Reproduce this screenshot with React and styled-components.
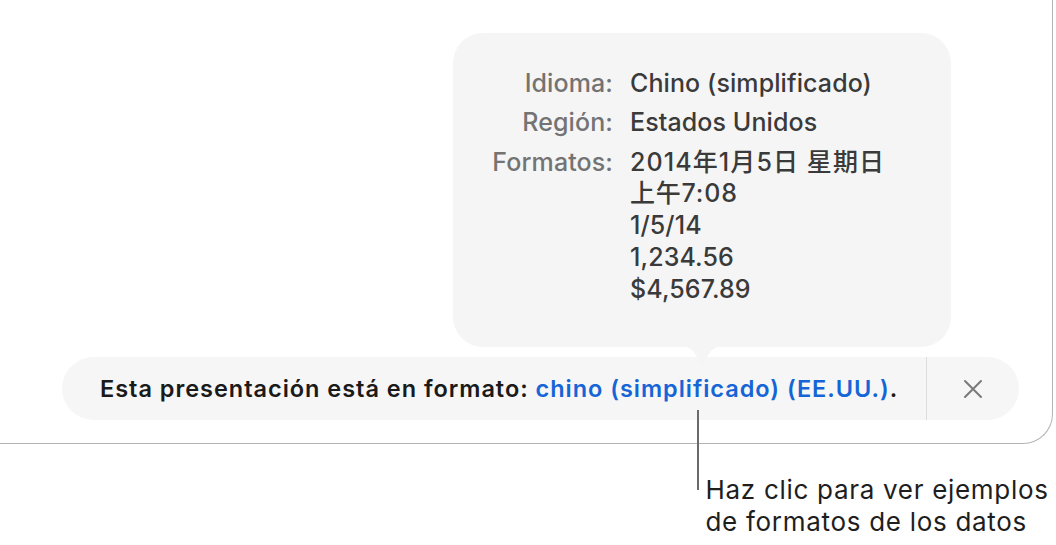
import React from "react";
import styled, { createGlobalStyle } from "styled-components";

const GlobalStyle = createGlobalStyle`
    html, body {
        margin: 0;
        padding: 0;
        background: #ffffff;
    }
    body {
        font-family: Inter, "Noto Sans", "Noto Sans CJK SC", sans-serif;
        -webkit-font-smoothing: antialiased;
    }
`;

const Page = styled.div`
    width: 1056px;
    height: 545px;
    overflow: hidden;
    background: #fff;
`;

const Frame = styled.div`
    width: 1053px;
    height: 444px;
    box-sizing: border-box;
    border-right: 1.5px solid #b4b4b4;
    border-bottom: 1.5px solid #b4b4b4;
    border-bottom-right-radius: 30px;
    padding-top: 33px;
    display: flex;
    flex-direction: column;
`;

const Popover = styled.div`
    position: relative;
    margin-left: 453px;
    width: 498px;
    height: 314px;
    box-sizing: border-box;
    padding: 35px 0 0 30px;
    background: #f5f5f5;
    border-radius: 30px;
    z-index: 2;
`;

const Arrow = styled.svg`
    position: absolute;
    left: 222px;
    bottom: -20px;
    width: 54px;
    height: 21px;
`;

const InfoGrid = styled.div`
    display: grid;
    grid-template-columns: 130px 1fr;
    column-gap: 17px;
    row-gap: 7.5px;
    font-size: 25px;
    line-height: 31.8px;
    letter-spacing: 0.1px;
`;

const Label = styled.div`
    justify-self: end;
    color: #737373;
    font-weight: 500;
`;

const Value = styled.div`
    color: #3a3a3a;
    font-weight: 500;
    white-space: nowrap;
`;

const Line = styled.span`
    display: block;
    letter-spacing: ${(props) => props.$tracking || "0.1px"};
`;

const Bar = styled.div`
    margin: 10px 0 0 62px;
    width: 957px;
    height: 63px;
    display: flex;
    align-items: stretch;
    background: #f6f6f6;
    border-radius: 32px;
`;

const Message = styled.div`
    flex: 1;
    display: flex;
    align-items: center;
    padding-left: 38px;
    font-size: 23.5px;
    letter-spacing: 0.97px;
    font-weight: 600;
    color: #1a1a1a;
    white-space: nowrap;
`;

const Link = styled.span`
    color: #1565d6;
    white-space: pre;
`;

const Divider = styled.div`
    width: 1px;
    background: #dcdcdc;
`;

const CloseButton = styled.button`
    width: 92px;
    border: 0;
    padding: 0;
    background: transparent;
    display: flex;
    align-items: center;
    justify-content: center;
    color: #7a7a7a;
`;

const Callout = styled.div`
    display: flex;
    align-items: flex-start;
    padding-left: 697px;
`;

const Leader = styled.div`
    width: 1.5px;
    height: 80px;
    margin-top: -34px;
    background: #6a6a6a;
`;

const CalloutText = styled.div`
    margin-top: 30px;
    padding-left: 7px;
    font-size: 26px;
    letter-spacing: 0.7px;
    line-height: 32px;
    color: #1e1e1e;
    font-weight: 400;
    white-space: nowrap;
`;

export default function App() {
    return (
        <Page>
            <GlobalStyle />
            <Frame>
                <Popover>
                    <InfoGrid>
                        <Label>Idioma:</Label>
                        <Value>Chino (simplificado)</Value>
                        <Label>Región:</Label>
                        <Value>Estados Unidos</Value>
                        <Label>Formatos:</Label>
                        <Value>
                            <Line $tracking="1.1px">2014年1月5日 星期日</Line>
                            <Line $tracking="0.8px">上午7:08</Line>
                            <Line>1/5/14</Line>
                            <Line>1,234.56</Line>
                            <Line>$4,567.89</Line>
                        </Value>
                    </InfoGrid>
                    <Arrow viewBox="0 0 54 21">
                        <path
                            d="M0 0 C14 0 18 3 22 11 L24.5 16 C26 19.5 28 19.5 29.5 16 L32 11 C36 3 40 0 54 0 Z"
                            fill="#f5f5f5"
                        />
                    </Arrow>
                </Popover>
                <Bar>
                    <Message>
                        Esta presentación está en formato:&nbsp;
                        <Link>chino (simplificado) (EE.UU.)</Link>.
                    </Message>
                    <Divider />
                    <CloseButton aria-label="Cerrar">
                        <svg width="20" height="20" viewBox="0 0 20 20">
                            <path
                                d="M2 2 L18 18 M18 2 L2 18"
                                stroke="currentColor"
                                strokeWidth="2"
                                strokeLinecap="round"
                            />
                        </svg>
                    </CloseButton>
                </Bar>
            </Frame>
            <Callout>
                <Leader />
                <CalloutText>
                    Haz clic para ver ejemplos
                    <br />
                    de formatos de los datos
                </CalloutText>
            </Callout>
        </Page>
    );
}
